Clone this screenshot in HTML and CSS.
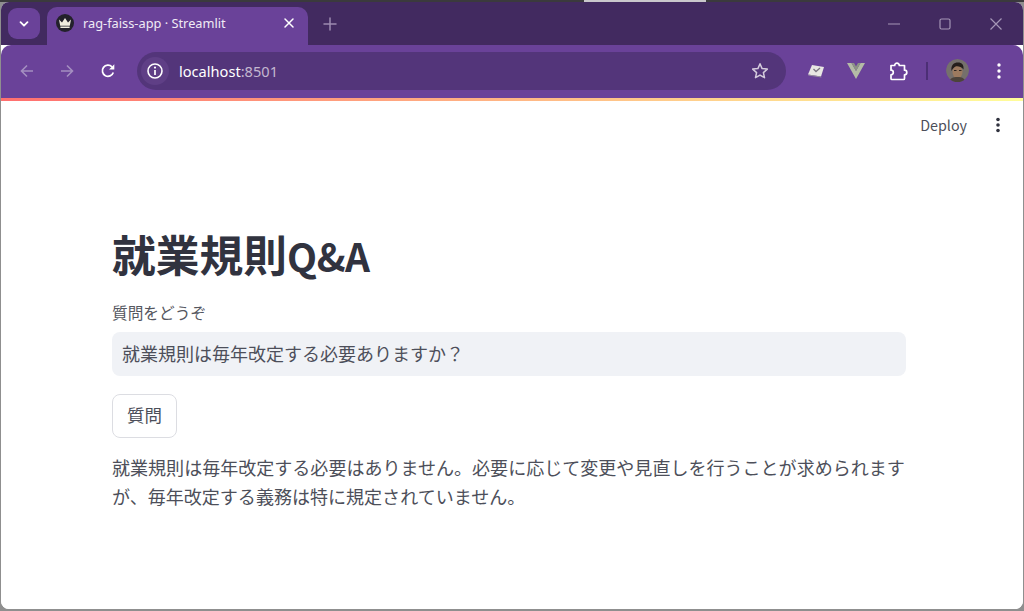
FILE: index.html
```html
<!DOCTYPE html>
<html lang="ja">
<head>
<meta charset="utf-8">
<title>rag-faiss-app · Streamlit</title>
<link rel="stylesheet" href="styles.css">
</head>
<body>
<div class="desktop-top"><span class="desktop-bar"></span></div>
<div class="window">
  <div class="tabstrip">
    <button class="tab-search"><svg width="12" height="12" viewBox="0 0 12 12"><path d="M2.5 4.2 6 7.7l3.5-3.5" fill="none" stroke="#fff" stroke-width="1.8" stroke-linecap="round" stroke-linejoin="round"/></svg></button>
    <div class="tab">
      <span class="favicon"><svg width="14" height="12" viewBox="0 0 14 12"><path d="M1 2.5 4 5.5 7 1l3 4.5 3-3-1.2 6.2H2.2zM2.4 9.6h9.2v1.5H2.4z" fill="#f1ede0"/></svg></span>
      <span class="tab-title">rag-faiss-app · Streamlit</span>
      <svg class="tab-close" width="12" height="12" viewBox="0 0 12 12"><path d="M2 2l8 8M10 2l-8 8" stroke="#fff" stroke-width="1.5" stroke-linecap="round"/></svg>
    </div>
    <svg class="new-tab" width="14" height="14" viewBox="0 0 14 14"><path d="M7 1v12M1 7h12" stroke="#9d8bb0" stroke-width="1.5" stroke-linecap="round"/></svg>
    <div class="win-controls">
      <svg width="12" height="12" viewBox="0 0 12 12"><path d="M0 6h12" stroke="#a596b6" stroke-width="1.2"/></svg>
      <svg width="12" height="12" viewBox="0 0 12 12"><rect x="1" y="1" width="10" height="10" rx="1.5" fill="none" stroke="#a596b6" stroke-width="1.2"/></svg>
      <svg width="12" height="12" viewBox="0 0 12 12"><path d="M.5.5l11 11M11.500.5l-11 11" stroke="#a596b6" stroke-width="1.2"/></svg>
    </div>
  </div>
  <div class="toolbar">
    <svg class="nav-back" width="16" height="16" viewBox="0 0 16 16"><path d="M14 8H2.500M8 2.500 2.500 8 8 13.500" fill="none" stroke="#a48fc0" stroke-width="1.6"/></svg>
    <svg class="nav-forward" width="16" height="16" viewBox="0 0 16 16"><path d="M2 8h11.500M8 2.500 13.500 8 8 13.500" fill="none" stroke="#a48fc0" stroke-width="1.6"/></svg>
    <svg class="nav-reload" width="16" height="16" viewBox="0 0 16 16"><path d="M13.300 9.500A5.600 5.600 0 1 1 12 3.800" fill="none" stroke="#fff" stroke-width="1.700"/><path d="M14.300 1.300v5.200H9.100z" fill="#fff"/></svg>
    <div class="omnibox">
      <span class="info-chip"><svg width="18" height="18" viewBox="0 0 18 18"><circle cx="9" cy="9" r="7" fill="none" stroke="#fff" stroke-width="1.600"/><path d="M9 8v5" stroke="#fff" stroke-width="1.700"/><circle cx="9" cy="5.600" r="1.100" fill="#fff"/></svg></span>
      <span class="url">localhost<span class="url-port">:8501</span></span>
      <svg class="star" width="18" height="18" viewBox="0 0 18 18"><path d="M9 1.800l2.100 4.800 5.200.5-3.900 3.500 1.100 5.100L9 13.100l-4.500 2.600 1.100-5.100-3.900-3.500 5.200-.5z" fill="none" stroke="#d4cbdc" stroke-width="1.500" stroke-linejoin="round"/></svg>
    </div>
    <div class="extensions">
      <svg class="ext-box" width="18" height="14" viewBox="0 0 18 14"><path d="M5 1l12 2-3 9.500L1 10.500z" fill="#e8e6e3"/><path d="M1 10.500l13 2 .5 1L1.500 11.500z" fill="#9a94a0"/><path d="M6.500 5l2.500 2.500L13 4" fill="none" stroke="#7a7480" stroke-width="1.300"/></svg>
      <svg class="ext-vue" width="18" height="16" viewBox="0 0 18 16"><path d="M0 0h4.500L9 8l4.500-8H18L9 16z" fill="#b4bba6"/><path d="M4.500 0H7l2 3.500L11 0h2.500L9 8z" fill="#8d9484"/></svg>
      <svg class="ext-puzzle" width="20" height="20" viewBox="0 0 20 20"><path d="M3 4.500h3.700a2.300 2.300 0 0 1 4.600 0H16.500v4.700a2.300 2.300 0 0 1 0 4.600V17.500a1 1 0 0 1-1 1H4a1 1 0 0 1-1-1v-3.700a2.300 2.300 0 0 0 0-4.600z" fill="none" stroke="#fff" stroke-width="1.700" stroke-linejoin="round"/></svg>
      <span class="divider"></span>
      <span class="avatar"><svg width="23" height="23" viewBox="0 0 23 23"><circle cx="11.500" cy="11.500" r="11.500" fill="#75706c"/><ellipse cx="11.500" cy="13" rx="5" ry="6.500" fill="#9c7a5f"/><path d="M5.500 12c-1-6 2.500-8.500 6.500-8.500s6 2.500 5.500 7c-2-3-6-3.500-8-3-1.500.5-3 2.500-4 4.500z" fill="#241e1b"/><path d="M8 11.500h2.500M13 11.500h2.500" stroke="#2c2420" stroke-width="1.200"/><path d="M3 23c1-4 4-5 8.500-5s7 1 8 5z" fill="#4c433b"/></svg></span>
      <svg class="menu-dots" width="4" height="16" viewBox="0 0 4 16"><circle cx="2" cy="2" r="1.700" fill="#fff"/><circle cx="2" cy="8" r="1.700" fill="#fff"/><circle cx="2" cy="14" r="1.700" fill="#fff"/></svg>
    </div>
  </div>
  <div class="app">
    <div class="app-deco"></div>
    <div class="app-header">
      <span class="deploy">Deploy</span>
      <svg class="app-menu" width="4" height="16" viewBox="0 0 4 16"><circle cx="2" cy="2.500" r="1.800" fill="#31333f"/><circle cx="2" cy="8" r="1.800" fill="#31333f"/><circle cx="2" cy="13.500" r="1.800" fill="#31333f"/></svg>
    </div>
    <main class="main">
      <h1 class="title">就業規則<span class="title-latin">Q&amp;A</span></h1>
      <label class="field-label" for="q">質問をどうぞ</label>
      <input class="field" id="q" type="text" value="就業規則は毎年改定する必要ありますか？">
      <button class="ask">質問</button>
      <p class="answer">就業規則は毎年改定する必要はありません。必要に応じて変更や見直しを行うことが求められますが、毎年改定する義務は特に規定されていません。</p>
    </main>
  </div>
</div>
</body>
</html>
```
FILE: styles.css
```css
* { box-sizing: border-box; }
html, body { margin: 0; height: 100%; overflow: hidden; }
body {
  background: #8f8f8f;
  font-family: "Noto Sans CJK JP", "Noto Sans", sans-serif;
  display: flex;
  flex-direction: column;
  height: 611px;
}
.desktop-top { height: 2px; background: #3b3a3d; flex: none; padding-left: 584px; }
.desktop-bar { display: block; width: 122px; height: 2px; background: #c9c7cc; }
.window {
  flex: none;
  height: 607px;
  display: flex;
  flex-direction: column;
  margin: 0 1px;
  border-radius: 8px;
  overflow: hidden;
  background: #fff;
}
.tabstrip {
  height: 43px;
  flex: none;
  background: #422a60;
  display: flex;
  align-items: flex-start;
  position: relative;
}
.tab-search {
  width: 32px;
  height: 31px;
  margin: 6px 0 0 7px;
  border: 0;
  padding: 0;
  border-radius: 9px;
  background: #6a4299;
  display: flex;
  align-items: center;
  justify-content: center;
}
.tab {
  width: 261px;
  height: 38px;
  margin: 5px 0 0 7px;
  background: #6a4299;
  border-radius: 10px 10px 0 0;
  display: flex;
  align-items: center;
  padding: 0 13px 6px 9px;
}
.favicon {
  width: 18px;
  height: 18px;
  border-radius: 50%;
  background: #23212b;
  display: flex;
  align-items: center;
  justify-content: center;
  flex: none;
}
.tab-title {
  flex: 1;
  color: #f0ebf5;
  font-size: 12.800px;
  font-family: "Noto Sans", sans-serif;
  margin-left: 9px;
}
.new-tab { margin: 15px 0 0 15px; }
.win-controls {
  margin-left: auto;
  display: flex;
  gap: 39px;
  padding: 16px 21px 0 0;
}
.toolbar {
  height: 53px;
  flex: none;
  background: #6a4299;
  display: flex;
  align-items: center;
  padding-bottom: 2px;
  border-radius: 10px 10px 0 0;
}
.nav-back { margin-left: 18px; }
.nav-forward { margin-left: 24px; }
.nav-reload { margin-left: 25px; }
.omnibox {
  width: 649px;
  height: 38px;
  margin-left: 21px;
  background: #53357a;
  border-radius: 19px;
  display: flex;
  align-items: center;
  padding: 0 17px 0 4px;
}
.info-chip {
  width: 28px;
  height: 28px;
  border-radius: 50%;
  background: #5f3f86;
  display: flex;
  align-items: center;
  justify-content: center;
}
.url {
  flex: 1;
  color: #fff;
  font-size: 14.600px;
  font-family: "Noto Sans", sans-serif;
  margin-left: 10px;
}
.url-port { color: #c3b8d0; }
.extensions { display: flex; align-items: center; flex: 1; }
.ext-box { margin-left: 21px; }
.ext-vue { margin-left: 22px; }
.ext-puzzle { margin-left: 23px; }
.divider { width: 2px; height: 18px; background: #4c2f75; margin-left: 18px; }
.avatar { width: 23px; height: 23px; border-radius: 50%; overflow: hidden; margin-left: 18px; display: block; }
.avatar svg { display: block; }
.menu-dots { margin-left: 28px; }
.app { flex: 1; background: #fff; display: flex; flex-direction: column; min-height: 0; }
.app-deco { height: 3px; flex: none; background: linear-gradient(90deg, #ff6f6f, #fffd9a); }
.app-header {
  height: 53px;
  flex: none;
  display: flex;
  align-items: flex-start;
  justify-content: flex-end;
  padding: 14px 23px 0 0;
  color: #31333f;
}
.deploy { font-size: 14.300px; line-height: 20px; color: #4d4f5a; }
.app-menu { margin: 2px 0 0 29px; }
.main {
  padding: 0 117px 0 111px;
  color: #31333f;
}
.title {
  margin: 69px 0 0;
  font-size: 43.750px;
  font-weight: 700;
  line-height: 60px;
  color: #31333f;
}
.title-latin { font-size: 39px; letter-spacing: -.4px; }
.field-label { display: block; margin-top: 17px; font-size: 15.700px; line-height: 22px; color: #55575f; }
.field {
  display: block;
  width: 794px;
  height: 44px;
  margin-top: 8px;
  padding: 0 10px 3px;
  border: 0;
  border-radius: 8px;
  background: #f0f2f6;
  color: #4d4f5a;
  font: inherit;
  font-size: 18px;
}
.ask {
  display: block;
  width: 65px;
  height: 44px;
  margin-top: 18px;
  padding: 0 0 3px;
  border: 1px solid #dcdde2;
  border-radius: 8px;
  background: #fff;
  color: #4d4f5a;
  font: inherit;
  font-size: 17.500px;
}
.answer {
  width: 794px;
  margin: 15px 0 0;
  font-size: 18.040px;
  line-height: 29px;
  color: #4d4f5a;
}
```
